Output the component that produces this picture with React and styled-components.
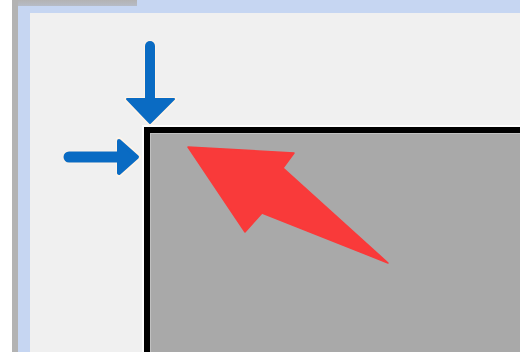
import styled, { createGlobalStyle } from 'styled-components'

const GlobalStyle = createGlobalStyle`
  html, body {
    margin: 0;
    padding: 0;
    width: 520px;
    height: 352px;
    overflow: hidden;
    background: #ffffff;
  }
  #root {
    height: 100%;
  }
`;

const Page = styled.div`
  position: relative;
  display: flex;
  width: 520px;
  height: 352px;
  background: #ffffff;
`;

const Window = styled.div`
  flex: 1;
  margin-left: 12px;
  border-left: 6px solid #b3b3b3;
  background: #c6d6f2;
  display: flex;
  flex-direction: column;
`;

const TopBar = styled.div`
  height: 13px;
  flex-shrink: 0;
`;

const TopTab = styled.div`
  width: 119px;
  height: 6px;
  background: linear-gradient(#b3b3b3, #b6bcc6);
`;

const Panel = styled.div`
  flex: 1;
  margin-left: 12px;
  background: #f0f0f0;
  display: flex;
  padding: 114px 0 0 114px;
  overflow: hidden;
`;

const Canvas = styled.div`
  flex: 1;
  height: 260px;
  margin: 0 -40px 0 0;
  background: #a9a9a9;
  border-left: 6px solid #000000;
  border-top: 6px solid #000000;
  box-shadow: 0 0 0 2px #fdfdfd, inset 1px 1px 0 #c0c0c0;
`;

const Overlay = styled.svg`
  position: absolute;
  left: 0;
  top: 0;
  width: 520px;
  height: 352px;
  pointer-events: none;
`;

const BLUE = '#0a6bc3';
const RED = '#f93a3a';
const HALO = '#fff4e8';

function Annotations() {
  return (
    <Overlay viewBox="0 0 520 352">
      {/* down arrow */}
      <g strokeLinejoin="round" strokeLinecap="round">
        <path d="M150 46 V100" stroke={HALO} strokeWidth="12" />
        <path d="M126 99 L175 99 L150 124 Z" fill={HALO} stroke={HALO} strokeWidth="4" />
        <path d="M150 46 V100" stroke={BLUE} strokeWidth="10" />
        <path d="M127 99 L174 99 L150 123 Z" fill={BLUE} stroke={BLUE} strokeWidth="2" />
      </g>
      {/* right arrow */}
      <g strokeLinejoin="round" strokeLinecap="round">
        <path d="M69 157 H122" stroke={HALO} strokeWidth="13" />
        <path d="M119 140 L138 157 L119 174 Z" fill={HALO} stroke={HALO} strokeWidth="6" />
        <path d="M69 157 H122" stroke={BLUE} strokeWidth="11" />
        <path d="M119 141 L137 157 L119 173 Z" fill={BLUE} stroke={BLUE} strokeWidth="4" />
      </g>
      {/* red pointer */}
      <path
        d="M188 147 L294 153 L283 168 L388 263 L262 213 L245 232 Z"
        fill={RED}
        stroke={RED}
        strokeWidth="1.5"
        strokeLinejoin="round"
      />
    </Overlay>
  );
}

export default function App() {
  return (
    <>
      <GlobalStyle />
      <Page>
        <Window>
          <TopBar>
            <TopTab />
          </TopBar>
          <Panel>
            <Canvas />
          </Panel>
        </Window>
        <Annotations />
      </Page>
    </>
  );
}
